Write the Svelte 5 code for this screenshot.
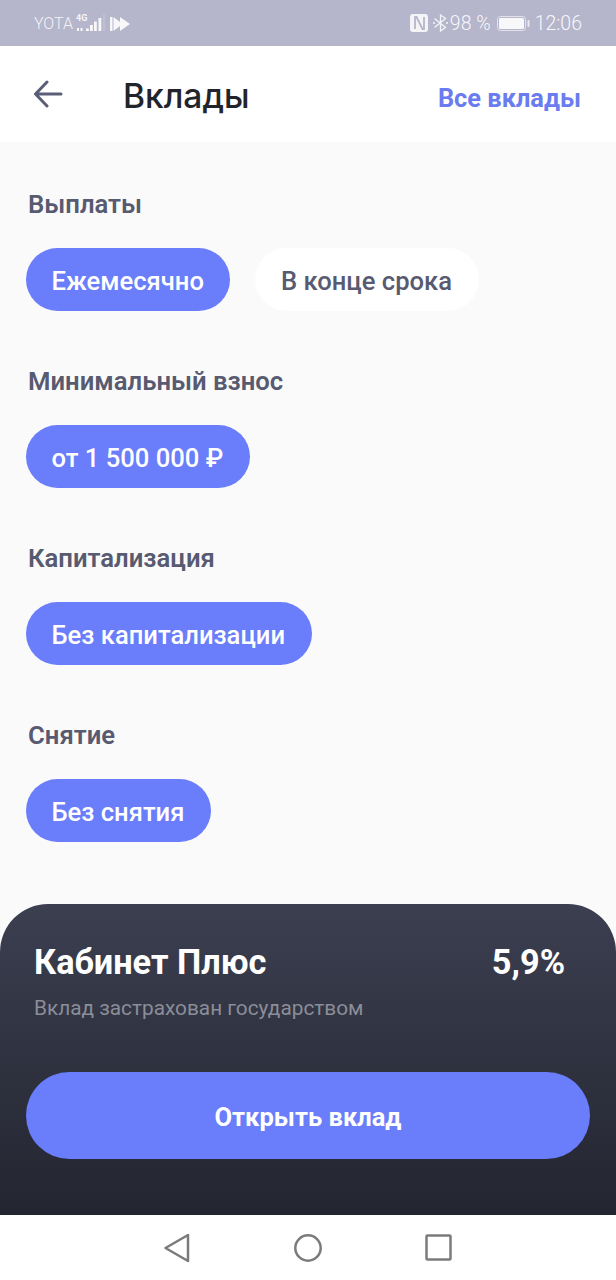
<script lang="ts">
  const sections = [
    { title: "Выплаты", options: [{ label: "Ежемесячно", active: true }, { label: "В конце срока", active: false }] },
    { title: "Минимальный взнос", options: [{ label: "от 1 500 000 ₽", active: true }] },
    { title: "Капитализация", options: [{ label: "Без капитализации", active: true }] },
    { title: "Снятие", options: [{ label: "Без снятия", active: true }] }
  ];
</script>

<main class="screen">
  <div class="status">
    <div class="status-left">
      <span class="carrier">YOTA</span>
      <svg class="signal" width="30" height="18" viewBox="0 0 30 18" fill="#fff" fill-opacity="0.9">
        <text x="1" y="7" font-size="9" font-weight="700" font-family="Roboto, sans-serif">4G</text>
        <rect x="2" y="14" width="2" height="3" />
        <rect x="5.500" y="14" width="2" height="3" />
        <rect x="11" y="14.500" width="2.800" height="2.500" />
        <rect x="15" y="11" width="2.800" height="6" />
        <rect x="19" y="7.500" width="2.800" height="9.500" />
        <rect x="23.500" y="4" width="2.800" height="13" />
        <rect x="28.500" y="0" width="1" height="17" fill-opacity="0.3" />
      </svg>
      <svg class="forward" width="20" height="14" viewBox="0 0 20 14" fill="#fff" fill-opacity="0.9">
        <path d="M0 0h2.500v14H0zM3.500 0L10 5V0l10 7-10 7V9l-6.500 5z" />
      </svg>
    </div>
    <div class="status-right">
      <svg width="18" height="18" viewBox="0 0 18 18">
        <rect width="18" height="18" rx="3" fill="#fff" fill-opacity="0.85" />
        <path d="M5 15V3h1.500l6 12H14V3" fill="none" stroke="#b5b6cb" stroke-width="1.800" />
      </svg>
      <svg class="bt" width="15" height="18" viewBox="0 0 15 18" fill="none" stroke="#fff" stroke-opacity="0.85" stroke-width="1.300">
        <path d="M1.500 4.500l11 9-5 3.500V1l5 3.500-11 9" />
        <path d="M0 9h2M13 9h2" />
      </svg>
      <span class="pct">98 %</span>
      <svg class="battery" width="33" height="15" viewBox="0 0 33 15">
        <rect x="0.500" y="0.500" width="28" height="14" rx="3" fill="none" stroke="#fff" stroke-opacity="0.6" />
        <rect x="2" y="2" width="25" height="11" rx="1.500" fill="#fff" fill-opacity="0.9" />
        <rect x="30.500" y="4" width="2" height="7" rx="1" fill="#fff" fill-opacity="0.7" />
      </svg>
      <span class="time">12:06</span>
    </div>
  </div>

  <header class="bar">
    <button class="back" aria-label="Назад">
      <svg width="30" height="28" viewBox="0 0 30 28" fill="none" stroke="#5a5e76" stroke-width="3" stroke-linecap="round" stroke-linejoin="round">
        <path d="M28 14H3M14 2L2.500 14 14 26" />
      </svg>
    </button>
    <h1>Вклады</h1>
    <a class="all" href="#all">Все вклады</a>
  </header>

  <div class="filters">
    {#each sections as section}
      <section class="group">
        <h2>{section.title}</h2>
        <div class="pills">
          {#each section.options as option}
            <span class="pill" class:active={option.active}>{option.label}</span>
          {/each}
        </div>
      </section>
    {/each}
  </div>

  <section class="sheet">
    <div class="sheet-head">
      <strong>Кабинет Плюс</strong>
      <strong class="rate">5,9%</strong>
    </div>
    <p>Вклад застрахован государством</p>
    <button class="open">Открыть вклад</button>
  </section>

  <nav class="nav">
    <svg width="28" height="30" viewBox="0 0 28 30" fill="none" stroke="#7b7b7b" stroke-width="2.500" stroke-linejoin="round">
      <path d="M25 2v26L2.500 15z" />
    </svg>
    <svg width="30" height="30" viewBox="0 0 30 30" fill="none" stroke="#7b7b7b" stroke-width="2.500">
      <circle cx="15" cy="15" r="12.700" />
    </svg>
    <svg width="27" height="27" viewBox="0 0 27 27" fill="none" stroke="#7b7b7b" stroke-width="2.500" stroke-linejoin="round">
      <rect x="1.500" y="1.500" width="24" height="24" rx="1" />
    </svg>
  </nav>
</main>

<style>
  :global(body) {
    margin: 0;
    background: #fafafa;
    font-family: Roboto, "Noto Sans", sans-serif;
  }

  .screen {
    width: 616px;
    height: 1280px;
    display: flex;
    flex-direction: column;
    overflow: hidden;
    background: #fafafa;
  }

  .status {
    height: 46px;
    flex: none;
    display: flex;
    justify-content: space-between;
    align-items: center;
    padding: 0 34px;
    background: #b5b6cb;
    color: #fff;
  }

  .status-left,
  .status-right {
    display: flex;
    align-items: center;
  }

  .carrier {
    font-size: 16px;
    font-weight: 300;
    opacity: 0.85;
  }

  .signal {
    margin-left: 2px;
  }

  .forward {
    margin: 2px 0 0 5px;
  }

  .bt {
    margin-left: 5px;
  }

  .pct,
  .time {
    font-size: 19.5px;
    font-weight: 300;
    opacity: 0.9;
  }

  .pct {
    margin-left: 2px;
  }

  .battery {
    margin-left: 6px;
  }

  .time {
    margin-left: 5px;
  }

  .bar {
    height: 96px;
    flex: none;
    display: flex;
    align-items: center;
    padding: 0 35px 0 33px;
    background: #fff;
  }

  .back {
    display: flex;
    width: 30px;
    padding: 0;
    border: 0;
    background: none;
  }

  h1 {
    margin: 2px 0 0 60px;
    font-size: 33.6px;
    font-weight: 500;
    color: #22232b;
    font-family: Inter, Roboto, sans-serif;
  }

  .all {
    margin: 8px 0 0 auto;
    font-size: 25.4px;
    font-weight: 700;
    color: #6b7cf0;
    text-decoration: none;
  }

  .filters {
    flex: 1;
    display: flex;
    flex-direction: column;
    gap: 56px;
    padding: 48px 26px 0;
  }

  h2 {
    margin: 0 0 30px 2px;
    font-size: 25.7px;
    line-height: 28px;
    font-weight: 600;
    color: #575a70;
  }

  .pills {
    display: flex;
    gap: 25px;
  }

  .pill {
    height: 63px;
    line-height: 67px;
    padding: 0 26.500px 0 25.500px;
    border-radius: 32px;
    font-size: 25.6px;
    font-weight: 500;
    color: #575a70;
    background: #fff;
  }

  .pill.active {
    color: #fff;
    background: #6a7dfb;
  }

  .sheet {
    height: 311px;
    flex: none;
    box-sizing: border-box;
    padding: 36px 26px 0;
    border-radius: 48px 48px 0 0;
    background: linear-gradient(#3c3f50, #232530);
    color: #fff;
  }

  .sheet-head {
    display: flex;
    justify-content: space-between;
    padding: 0 25px 0 8px;
    font-size: 34.3px;
    line-height: 44px;
  }

  .sheet-head strong {
    font-weight: 700;
  }

  .sheet p {
    margin: 12px 0 0 8px;
    font-size: 20.8px;
    line-height: 24px;
    color: #8b8d98;
  }

  .open {
    display: block;
    width: 100%;
    height: 87px;
    margin-top: 52px;
    padding: 3px 0 0;
    border: 0;
    border-radius: 44px;
    background: #6a7dfb;
    color: #fff;
    font-family: inherit;
    font-size: 25.5px;
    font-weight: 700;
  }

  .nav {
    height: 65px;
    flex: none;
    display: flex;
    justify-content: center;
    align-items: center;
    gap: 102px;
    padding-right: 2px;
    background: #fff;
  }
</style>
